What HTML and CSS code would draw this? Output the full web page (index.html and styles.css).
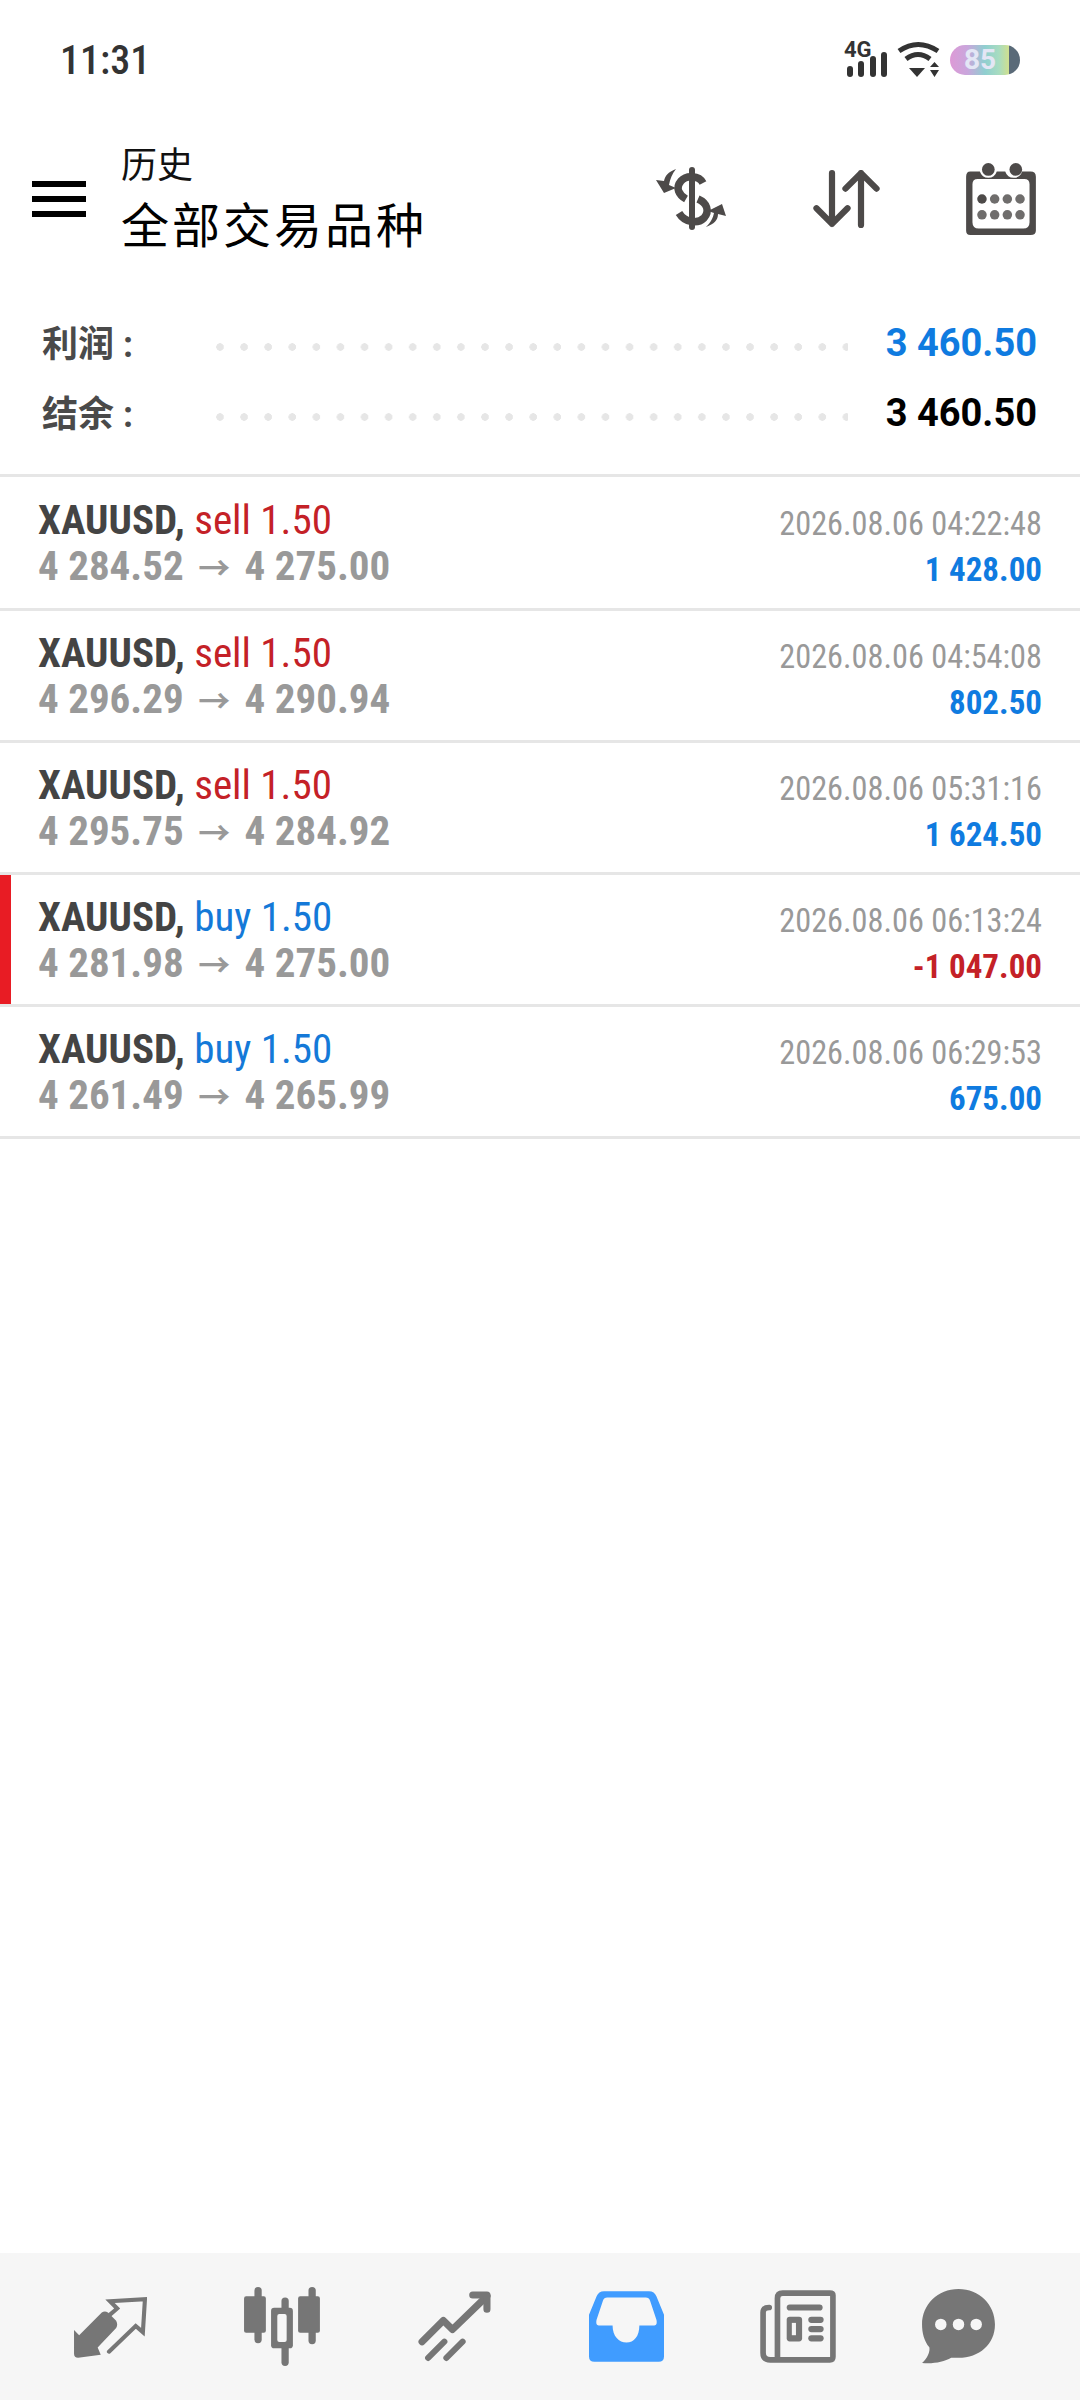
FILE: index.html
```html
<!DOCTYPE html>
<html lang="zh">
<head>
<meta charset="utf-8">
<title>历史</title>
<link rel="stylesheet" href="styles.css">
</head>
<body>
<div class="page">
	<!-- status bar -->
	<div class="status">
		<span class="clock">11:31</span>
		<div class="status-icons">
			<svg width="44" height="50" viewBox="0 -6 44 50"><text x="0" y="16" class="net">4G</text><g fill="#333"><rect x="3" y="25" width="6" height="11" rx="3"/><rect x="14" y="20" width="6" height="16" rx="3"/><rect x="26" y="15" width="6" height="21" rx="3"/><rect x="37" y="11" width="6" height="25" rx="3"/></g></svg>
			<svg width="44" height="38" viewBox="0 0 44 38"><g fill="none" stroke="#333" stroke-width="5"><path d="M2 10Q21 -3 41 10"/><path d="M9 18Q21 9 33 18"/></g><g fill="#333"><path d="M13 27H29L21 36Z" transform="translate(-1 0)"/><path d="M33 26L37.5 21L42 26ZM33 29H42L37.5 36Z"/></g></svg>
			<div class="battery"><span>85</span></div>
		</div>
	</div>

	<!-- toolbar -->
	<header class="toolbar">
		<svg class="menu" width="54" height="36" viewBox="0 0 54 36"><g fill="#000"><rect y="0" width="54" height="6"/><rect y="15" width="54" height="6"/><rect y="30" width="54" height="6"/></g></svg>
		<div class="title">
			<div class="title-small">历史</div>
			<div class="title-big">全部交易品种</div>
		</div>
		<div class="actions">
			<svg width="72" height="64" viewBox="0 0 72 62"><g fill="none" stroke="#4d4a49" stroke-linecap="round"><path d="M36 2V59" stroke-width="6"/><path d="M47 15C43 7 30 7 25 13C19 20 23 27 30 31M42 31C51 35 54 43 48 50C42 56 29 55 23 45" stroke-width="7.5" stroke-linecap="butt"/></g><path fill="#4d4a49" d="M20 1C12 4 9 8 8 13L0 12L8 25L20 20L13 17C14 11 16 6 20 1ZM50 59C58 56 62 52 62 46L70 48L66 36L52 43L58 45C57 50 55 54 50 59Z"/></svg>
			<svg width="67" height="58" viewBox="0 0 64 56"><g fill="none" stroke="#4d4a49" stroke-width="6" stroke-linecap="round" stroke-linejoin="round"><path d="M18 3V52M3 37L18 52L33 37"/><path d="M46 53V3M31 18L46 3L61 18"/></g></svg>
			<svg width="72" height="74" viewBox="0 0 68 70"><path fill="#4d4a49" fill-rule="evenodd" d="M5 9H14Q16 15 22 15Q28 15 30 9H38Q40 15 46 15Q52 15 54 9H62Q67 9 67 14V65Q67 69 62 69H5Q1 69 1 65V14Q1 9 5 9ZM12 16Q7 16 7 21V57Q7 63 13 63H55Q61 63 61 57V21Q61 16 56 16H12Z"/><circle cx="22" cy="7" r="6" fill="#4d4a49"/><circle cx="48" cy="7" r="6" fill="#4d4a49"/><g fill="#6f6d6c"><circle cx="16" cy="35" r="4.5" fill="#4d4a49"/><circle cx="28" cy="35" r="4.5"/><circle cx="40" cy="35" r="4.5"/><circle cx="52" cy="35" r="4.5"/><circle cx="16" cy="50" r="4.5"/><circle cx="28" cy="50" r="4.5"/><circle cx="40" cy="50" r="4.5"/><circle cx="52" cy="50" r="4.5"/></g></svg>
		</div>
	</header>

	<!-- summary -->
	<section class="summary">
		<div class="sum-row"><span class="sum-label">利润 :</span><span class="dots"></span><span class="sum-val blue">3 460.50</span></div>
		<div class="sum-row"><span class="sum-label">结余 :</span><span class="dots"></span><span class="sum-val">3 460.50</span></div>
	</section>

	<!-- deals -->
	<ul class="deals">
		<li class="deal">
			<div class="deal-left"><div class="deal-top"><b>XAUUSD,</b> <span class="red">sell 1.50</span></div><div class="deal-price">4 284.52 <span class="arrow">→</span> 4 275.00</div></div>
			<div class="deal-right"><div class="deal-time">2026.08.06 04:22:48</div><div class="deal-profit blue">1 428.00</div></div>
		</li>
		<li class="deal">
			<div class="deal-left"><div class="deal-top"><b>XAUUSD,</b> <span class="red">sell 1.50</span></div><div class="deal-price">4 296.29 <span class="arrow">→</span> 4 290.94</div></div>
			<div class="deal-right"><div class="deal-time">2026.08.06 04:54:08</div><div class="deal-profit blue">802.50</div></div>
		</li>
		<li class="deal">
			<div class="deal-left"><div class="deal-top"><b>XAUUSD,</b> <span class="red">sell 1.50</span></div><div class="deal-price">4 295.75 <span class="arrow">→</span> 4 284.92</div></div>
			<div class="deal-right"><div class="deal-time">2026.08.06 05:31:16</div><div class="deal-profit blue">1 624.50</div></div>
		</li>
		<li class="deal loss">
			<div class="deal-left"><div class="deal-top"><b>XAUUSD,</b> <span class="blue-n">buy 1.50</span></div><div class="deal-price">4 281.98 <span class="arrow">→</span> 4 275.00</div></div>
			<div class="deal-right"><div class="deal-time">2026.08.06 06:13:24</div><div class="deal-profit red">-1 047.00</div></div>
		</li>
		<li class="deal">
			<div class="deal-left"><div class="deal-top"><b>XAUUSD,</b> <span class="blue-n">buy 1.50</span></div><div class="deal-price">4 261.49 <span class="arrow">→</span> 4 265.99</div></div>
			<div class="deal-right"><div class="deal-time">2026.08.06 06:29:53</div><div class="deal-profit blue">675.00</div></div>
		</li>
	</ul>

	<!-- bottom tabs -->
	<nav class="tabs">
		<div class="tab"><svg width="74" height="68" viewBox="0 0 72 66"><path fill="#767676" d="M1 36L6 41L28 19Q31 17 34 19L42 27Q44 31 42 34L24 53L27 60L5 63Q1 63 1 59Z"/><path fill="none" stroke="#767676" stroke-width="4" stroke-linecap="round" d="M36 21L43 15L36 8L70 6L68 38L61 32L35 57"/></svg></div>
		<div class="tab"><svg width="77" height="79" viewBox="0 0 74 76"><g fill="#767676"><rect x="10" y="0" width="7" height="54" rx="3.5"/><rect x="0" y="9" width="21" height="35" rx="2"/><rect x="62" y="0" width="7" height="55" rx="3.5"/><rect x="52" y="9" width="21" height="35" rx="2"/><rect x="36" y="10" width="7" height="66" rx="3.5"/><rect x="26" y="20" width="21" height="39" rx="3"/></g><rect x="32" y="26" width="9" height="27" rx="2" fill="#f6f6f6"/></svg></div>
		<div class="tab"><svg width="73" height="71" viewBox="0 0 72 70"><g fill="none" stroke="#767676" stroke-width="7" stroke-linecap="round" stroke-linejoin="round"><path d="M4 50L25 29L34 38L68 5"/><path d="M54 4H68V18"/><path stroke-width="6" d="M10 66L26 50M28 66L44 50"/></g></svg></div>
		<div class="tab"><svg width="75" height="71" viewBox="0 0 70 66"><path fill="#409cff" fill-rule="evenodd" d="M14 0H56Q61 0 63 5L70 22V61Q70 66 65 66H5Q0 66 0 61V22L7 5Q9 0 14 0ZM17 6Q14 6 13 9L7 27Q6 32 9 32H22C22 42 28 48 35 48C42 48 47 42 47 32H61Q64 32 63 27L57 9Q56 6 53 6Z"/></svg></div>
		<div class="tab"><svg width="76" height="74" viewBox="0 0 74 72"><path fill="none" stroke="#767676" stroke-width="5.5" stroke-linecap="round" stroke-linejoin="round" d="M9 17Q3 17 3 22V61Q3 68 10 68H17M16 68H68Q71 68 71 65V5Q71 3 68 3H22Q17 3 17 8V68"/><g fill="#767676"><rect x="26" y="14" width="35" height="6" rx="3"/><rect x="26" y="26" width="15" height="24" rx="3"/><rect x="47" y="26" width="15" height="6" rx="3"/><rect x="47" y="35" width="15" height="6" rx="3"/><rect x="47" y="44" width="15" height="6" rx="3"/></g><rect x="31" y="32" width="4" height="12" fill="#f6f6f6"/></svg></div>
		<div class="tab tab-chat"><svg width="75" height="75" viewBox="0 0 72 72"><path fill="#767676" d="M36 0C56 0 71 15 71 34C71 53 56 66 36 66C34 66 31 66 29 66C22 70 12 72 1 71C6 67 9 60 8 56C3 50 1 42 1 34C1 15 16 0 36 0Z"/><g fill="#f6f6f6"><circle cx="19" cy="34" r="5.5"/><circle cx="36" cy="34" r="5.5"/><circle cx="53" cy="34" r="5.5"/></g></svg></div>
	</nav>
</div>
</body>
</html>
```

FILE: styles.css
```css
html, body {
	margin: 0;
	height: 100%;
	background: #fff;
}
.page {
	width: 1080px;
	height: 2400px;
	display: flex;
	flex-direction: column;
	font-family: Roboto, "Noto Sans CJK SC", sans-serif;
	overflow: hidden;
}
.status {
	height: 120px;
	padding: 0 60px;
	display: flex;
	justify-content: space-between;
	align-items: center;
}
.clock {
	font-size: 40px;
	font-stretch: 82%;
	font-weight: 500;
	color: #333;
}
.status-icons {
	display: flex;
	align-items: center;
	gap: 9px;
}
.net {
	font: bold 22px Roboto, sans-serif;
	fill: #333;
}
.battery {
	width: 70px;
	height: 30px;
	border-radius: 15px;
	background: linear-gradient(90deg, #dd9ad6 0%, #c9a6dc 25%, #8fcfd0 50%, #a8dcc0 70%, #cfe08f 84%, #5a6a78 85%);
	text-align: center;
	line-height: 30px;
	font-size: 28px;
	font-weight: 700;
	color: #e3e6f5;
}
.battery span {
	display: block;
	padding-right: 10px;
}
.toolbar {
	height: 158px;
	display: flex;
	align-items: center;
	padding: 0 43px 0 32px;
}
.title {
	margin: 10px 0 0 35px;
	flex: 1;
}
.title-small {
	font-size: 36px;
	line-height: 46px;
	color: #111;
}
.title-big {
	font-size: 48px;
	line-height: 76px;
	letter-spacing: 3px;
	color: #000;
}
.actions {
	display: flex;
	align-items: center;
	gap: 85px;
}
.summary {
	padding: 30px 43px 0 42px;
	height: 196px;
	box-sizing: border-box;
}
.sum-row {
	display: flex;
	align-items: center;
	height: 70px;
}
.sum-label {
	width: 100px;
	margin-top: -5px;
	font-size: 36px;
	font-weight: 700;
	color: #4a4a4a;
}
.dots {
	flex: 1;
	height: 8px;
	margin: 8px 38px 0 74px;
	background: radial-gradient(circle 4px at 4px 4px, #e6e6e6 3.5px, transparent 4px) 0 0 / 24.1px 8px repeat-x;
}
.sum-val {
	font-size: 38px;
	font-weight: 700;
	color: #000;
}
.sum-val.blue {
	color: #0f7be0;
}
.deals {
	list-style: none;
	margin: 0;
	padding: 0;
	border-top: 3px solid #e6e6e6;
}
.deal {
	box-sizing: border-box;
	height: 132px;
	border-bottom: 3px solid #e6e6e6;
	padding: 0 38px;
	display: flex;
	justify-content: space-between;
	align-items: center;
	font-stretch: 75%;
}
.deal:first-child {
	height: 134px;
}
.deal.loss {
	box-shadow: inset 11px 0 0 #e81c24;
}
.deal-top {
	font-size: 41px;
	line-height: 46px;
}
.deal-top b {
	color: #444;
}
.blue-n {
	color: #1479d8;
}
.red {
	color: #c42127;
}
.deal-price {
	font-size: 41px;
	line-height: 46px;
	font-weight: 700;
	color: #999;
}
.arrow {
	margin: 0 5px;
	font-family: "Noto Sans CJK SC", sans-serif;
	font-weight: 700;
	font-size: 32px;
	line-height: 32px;
}
.deal-right {
	margin-top: 8px;
	text-align: right;
}
.deal-time {
	font-size: 32.3px;
	line-height: 46px;
	color: #999;
}
.deal-profit {
	font-size: 33px;
	line-height: 46px;
	font-weight: 700;
}
.deal-profit.blue {
	color: #0f7be0;
}
.tabs {
	margin-top: auto;
	height: 147px;
	padding: 0 24px;
	background: #f6f6f6;
	display: flex;
	align-items: center;
}
.tab {
	flex: 0 0 172px;
	display: flex;
	justify-content: center;
}
.tab-chat {
	margin-left: -12px;
}
```
